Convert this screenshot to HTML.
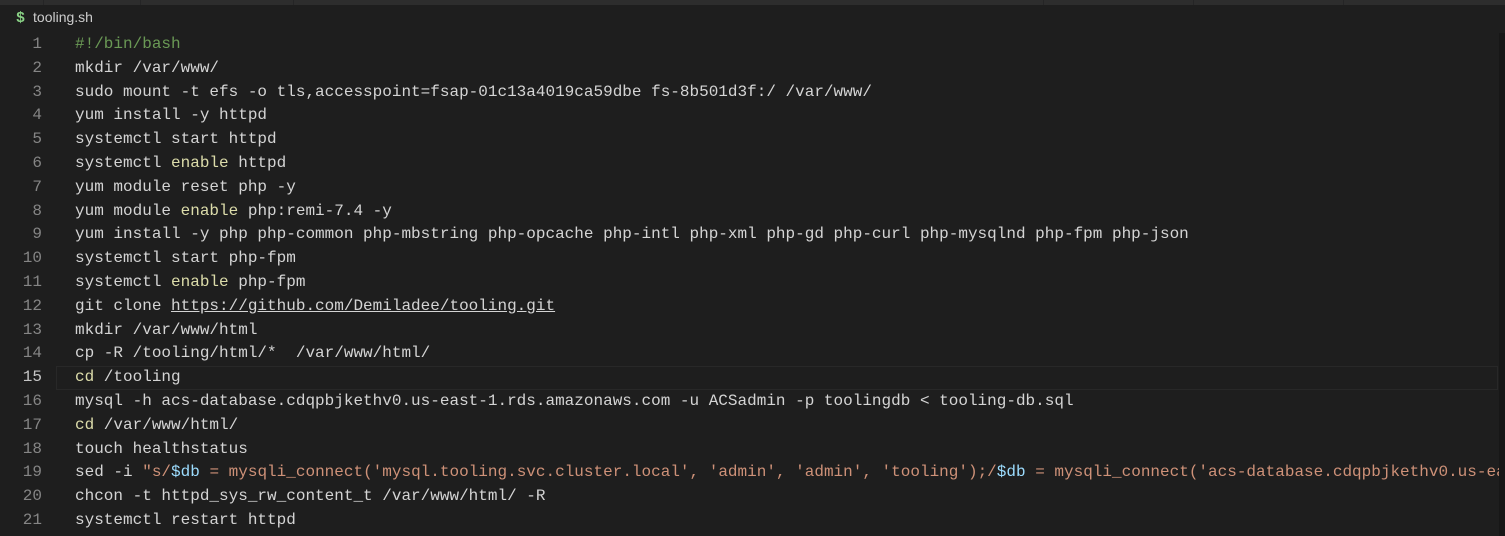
<!DOCTYPE html>
<html><head><style>
html,body{margin:0;padding:0;width:1505px;height:536px;overflow:hidden;background:#1e1e1e;}
.tabs{position:absolute;left:0;top:0;width:1505px;height:5px;background:#2d2d2d;}
.tabs i{position:absolute;top:0;width:1px;height:5px;background:#252526;}
.crumb{position:absolute;left:16px;top:9px;font:14px "Liberation Sans",sans-serif;color:#cccccc;}
.crumb b{color:#89d185;font-family:"Liberation Mono",monospace;font-size:15px;margin-right:8px;}
.ln{position:absolute;left:0;width:42px;text-align:right;font:16px/23.8px "Liberation Mono",monospace;color:#858585;}
.code{position:absolute;left:75px;width:1424px;overflow:hidden;font:16px/23.8px "Liberation Mono",monospace;color:#d4d4d4;}
.row{height:23.8px;white-space:pre;}
.cur{position:absolute;left:56px;top:366px;width:1440px;height:22px;border:1px solid #282828;}
.c{color:#6a9955}.y{color:#dcdcaa}.s{color:#ce9178}.v{color:#9cdcfe}.u{text-decoration:underline}
.sb{position:absolute;left:1499px;top:33px;width:6px;height:503px;background:#171717;}
</style></head><body>
<div class="tabs"><i style="left:43px"></i><i style="left:140px"></i><i style="left:293px"></i><i style="left:1043px"></i><i style="left:1193px"></i><i style="left:1343px"></i></div>
<div class="crumb"><b>$</b>tooling.sh</div>
<div class="cur"></div>
<div class="sb"></div>
<div class="ln" style="top:33px"><div class="row">1</div><div class="row">2</div><div class="row">3</div><div class="row">4</div><div class="row">5</div><div class="row">6</div><div class="row">7</div><div class="row">8</div><div class="row">9</div><div class="row">10</div><div class="row">11</div><div class="row">12</div><div class="row">13</div><div class="row">14</div><div class="row" style="color:#c6c6c6">15</div><div class="row">16</div><div class="row">17</div><div class="row">18</div><div class="row">19</div><div class="row">20</div><div class="row">21</div></div>
<div class="code" style="top:33px"><div class="row"><span class="c">#!/bin/bash</span></div><div class="row">mkdir /var/www/</div><div class="row">sudo mount -t efs -o tls,accesspoint=fsap-01c13a4019ca59dbe fs-8b501d3f:/ /var/www/</div><div class="row">yum install -y httpd</div><div class="row">systemctl start httpd</div><div class="row">systemctl <span class="y">enable</span> httpd</div><div class="row">yum module reset php -y</div><div class="row">yum module <span class="y">enable</span> php:remi-7.4 -y</div><div class="row">yum install -y php php-common php-mbstring php-opcache php-intl php-xml php-gd php-curl php-mysqlnd php-fpm php-json</div><div class="row">systemctl start php-fpm</div><div class="row">systemctl <span class="y">enable</span> php-fpm</div><div class="row">git clone <span class="u">https://github.com/Demiladee/tooling.git</span></div><div class="row">mkdir /var/www/html</div><div class="row">cp -R /tooling/html/*  /var/www/html/</div><div class="row"><span class="y">cd</span> /tooling</div><div class="row">mysql -h acs-database.cdqpbjkethv0.us-east-1.rds.amazonaws.com -u ACSadmin -p toolingdb &lt; tooling-db.sql</div><div class="row"><span class="y">cd</span> /var/www/html/</div><div class="row">touch healthstatus</div><div class="row">sed -i <span class="s">"s/</span><span class="v">$db</span><span class="s"> = mysqli_connect('mysql.tooling.svc.cluster.local', 'admin', 'admin', 'tooling');/</span><span class="v">$db</span><span class="s"> = mysqli_connect('acs-database.cdqpbjkethv0.us-east-1.rds.amazonaws.com'</span></div><div class="row">chcon -t httpd_sys_rw_content_t /var/www/html/ -R</div><div class="row">systemctl restart httpd</div></div>
</body></html>
